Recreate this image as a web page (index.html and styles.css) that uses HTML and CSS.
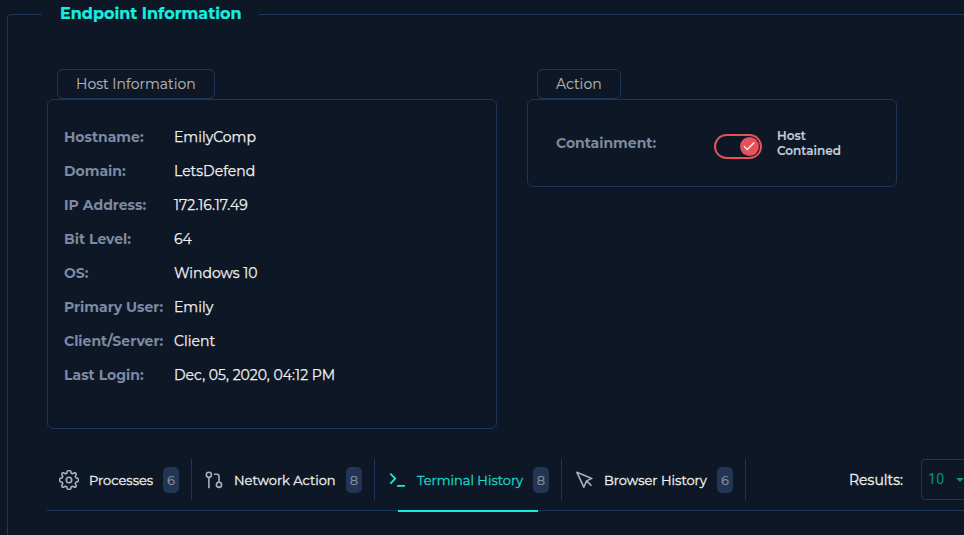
FILE: index.html
```html
<!DOCTYPE html>
<html lang="en">
<head>
<meta charset="utf-8">
<title>Endpoint Information</title>
<link rel="stylesheet" href="styles.css">
</head>
<body>
<fieldset class="endpoint">
  <legend class="endpoint-title">Endpoint Information</legend>
  <div class="panels">
    <section class="host">
      <h2 class="panel-tab">Host Information</h2>
      <dl class="panel host-panel">
        <dt>Hostname:</dt><dd>EmilyComp</dd>
        <dt>Domain:</dt><dd>LetsDefend</dd>
        <dt>IP Address:</dt><dd>172.16.17.49</dd>
        <dt>Bit Level:</dt><dd>64</dd>
        <dt>OS:</dt><dd>Windows 10</dd>
        <dt>Primary User:</dt><dd>Emily</dd>
        <dt>Client/Server:</dt><dd>Client</dd>
        <dt>Last Login:</dt><dd>Dec, 05, 2020, 04:12 PM</dd>
      </dl>
    </section>
    <section class="action">
      <h2 class="panel-tab action-tab">Action</h2>
      <div class="panel action-panel">
        <span class="containment">Containment:</span>
        <span class="toggle"><svg class="knob" viewBox="0 0 20 20"><circle cx="10" cy="10" r="10"/><path d="M4.2 9.6l3.4 3.6 7.4-7.4"/></svg></span>
        <span class="state">Host<br>Contained</span>
      </div>
    </section>
  </div>
  <nav class="tabs">
    <div class="tab processes">
      <svg class="icon" width="20" height="20" viewBox="0 0 20 20"><path d="M8.3 1.2Q10-.1 11.7 1.2L12.2 3.2 13.7 3.8 15.2 2.9Q17.5 2.5 17.1 4.8L16.2 6.3 16.8 7.8 18.8 8.3Q20.1 10 18.8 11.7L16.8 12.2 16.2 13.7 17.1 15.2Q17.5 17.5 15.2 17.1L13.7 16.2 12.2 16.8 11.7 18.8Q10 20.1 8.3 18.8L7.8 16.8 6.3 16.2 4.8 17.1Q2.5 17.5 2.9 15.2L3.8 13.7 3.2 12.2 1.2 11.7Q-.1 10 1.2 8.3L3.2 7.8 3.8 6.3 2.9 4.8Q2.5 2.5 4.8 2.9L6.3 3.8 7.8 3.2Z"/><circle cx="10" cy="10" r="2.7"/></svg>
      <span class="name">Processes</span><span class="count">6</span>
    </div>
    <div class="tab network">
      <svg class="icon" width="18" height="18" viewBox="0 0 18 18"><circle cx="3.9" cy="3.8" r="2.6"/><path d="M3.9 6.5v10.8M9 3.2h3q2 0 2 2v6"/><circle cx="14" cy="13.8" r="2.6"/></svg>
      <span class="name">Network Action</span><span class="count">8</span>
    </div>
    <div class="tab terminal">
      <svg class="icon" width="17" height="16" viewBox="0 0 17 16"><path d="M1.3 1.7l5 5-5 5M8 13.8h8"/></svg>
      <span class="name">Terminal History</span><span class="count">8</span>
    </div>
    <div class="tab browser">
      <svg class="icon" width="18" height="18" viewBox="0 0 18 18"><path d="M.9 1.3L15.8 7.4l-5.2 2.5-2.8 6.3zM10.6 9.9l4.9 4.9"/></svg>
      <span class="name">Browser History</span><span class="count">6</span>
    </div>
    <label class="results"><span>Results:</span><span class="select">10<i class="caret"></i></span></label>
  </nav>
  <div class="underline"></div>
</fieldset>
</body>
</html>
```

FILE: styles.css
```css
* { box-sizing: border-box; }

html { overflow: hidden; }

body {
  margin: 0;
  width: 964px;
  height: 535px;
  overflow: hidden;
  background: #0e1725;
  color: #f0f0f0;
  font: 14px/20px Montserrat, Inter, sans-serif;
}

.endpoint {
  width: 1000px;
  height: 531px;
  margin: 4px 0 0 7px;
  padding: 0 0 0 39px;
  border: 1px solid #203658;
  border-bottom: 0;
  border-radius: 4px 0 0 0;
}

.endpoint-title {
  width: 217px;
  height: 20px;
  margin-left: -5px;
  padding-left: 18px;
  color: #17eee0;
  font-size: 16px;
  font-weight: 700;
  line-height: 20px;
  white-space: nowrap;
  -webkit-text-stroke: 0.2px;
}

.panels {
  display: flex;
  align-items: flex-start;
  gap: 30px;
  margin-top: 45px;
}

.host { width: 450px; }
.action { width: 370px; }

.panel-tab {
  width: 158px;
  height: 30px;
  margin: 0 0 0 10px;
  padding-left: 18px;
  border: 1px solid #203658;
  border-radius: 6px;
  color: #b0b2b5;
  font-size: 14px;
  font-weight: 400;
  line-height: 29px;
  -webkit-text-stroke: 0.15px;
}

.action-tab { width: 84px; }

.panel {
  margin: 0;
  border: 1px solid #203658;
  border-radius: 6px;
}

.host-panel {
  display: grid;
  grid-template-columns: 110px 1fr;
  grid-auto-rows: 34px;
  height: 330px;
  padding: 20px 16px;
  line-height: 34px;
  white-space: nowrap;
}

dt, .containment { color: #7c8aa3; font-weight: 700; }
dd { margin: 0; -webkit-text-stroke: 0.25px; }

.action-panel {
  display: flex;
  align-items: flex-start;
  height: 88px;
  padding: 33px 0 0 28px;
}

.containment { width: 158px; }

.toggle {
  display: flex;
  justify-content: flex-end;
  width: 48px;
  height: 25px;
  margin: 1px 15px 0 0;
  padding: 1px;
  border: 2px solid #e8505b;
  border-radius: 13px;
}

.knob { width: 19px; height: 19px; }
.knob circle { fill: #e8505b; }
.knob path { fill: none; stroke: #fff; stroke-width: 1.3; }

.state {
  margin-top: -5px;
  color: #c3cbd9;
  font-size: 12px;
  font-weight: 600;
  line-height: 15px;
  -webkit-text-stroke: 0.15px;
}

.tabs {
  display: flex;
  height: 41px;
  margin-top: 30px;
  font-size: 13px;
  white-space: nowrap;
}

.tab {
  display: flex;
  align-items: center;
  border-right: 1px solid #203658;
}

.name, .results > :first-child { -webkit-text-stroke: 0.3px; }

.processes { width: 145px; padding-left: 12px; }
.network { width: 183px; padding-left: 13px; }
.terminal { width: 187px; padding-left: 14px; color: #17d8cc; }
.browser { width: 184px; padding-left: 14px; }

.icon {
  flex: none;
  fill: none;
  stroke: #a9afc2;
  stroke-width: 1.6;
  stroke-linejoin: round;
}

.terminal .icon { stroke: #17eee0; stroke-width: 1.8; }
.processes .name { margin-left: 10px; }
.network .name { margin-left: 11px; }
.terminal .name { margin-left: 11px; }
.browser .name { margin-left: 10px; }

.count {
  width: 16px;
  height: 26px;
  margin: 0 12px 0 auto;
  border-radius: 5px;
  background: #233554;
  color: #8b909a;
  font-size: 13px;
  line-height: 27px;
  text-align: center;
  -webkit-text-stroke: 0.2px;
}

.results {
  display: flex;
  align-items: center;
  margin-left: 103px;
  font-size: 14px;
}

.results > :first-child { width: 72px; }

.select {
  display: flex;
  align-items: center;
  width: 60px;
  height: 41px;
  padding: 0 0 2px 6px;
  border: 1px solid #203658;
  border-radius: 4px;
  color: #089383;
  font-family: Roboto, sans-serif;
  letter-spacing: 0.4px;
}

.caret {
  margin: 2px 0 0 11px;
  border: 4px solid transparent;
  border-top-color: #089383;
  border-bottom: 0;
}

.underline {
  height: 2px;
  margin-top: 10px;
  background: linear-gradient(#17eee0, #17eee0) 351px 0 / 140px 2px no-repeat,
    linear-gradient(#203658, #203658) 0 0 / 100% 1px no-repeat;
}
```
